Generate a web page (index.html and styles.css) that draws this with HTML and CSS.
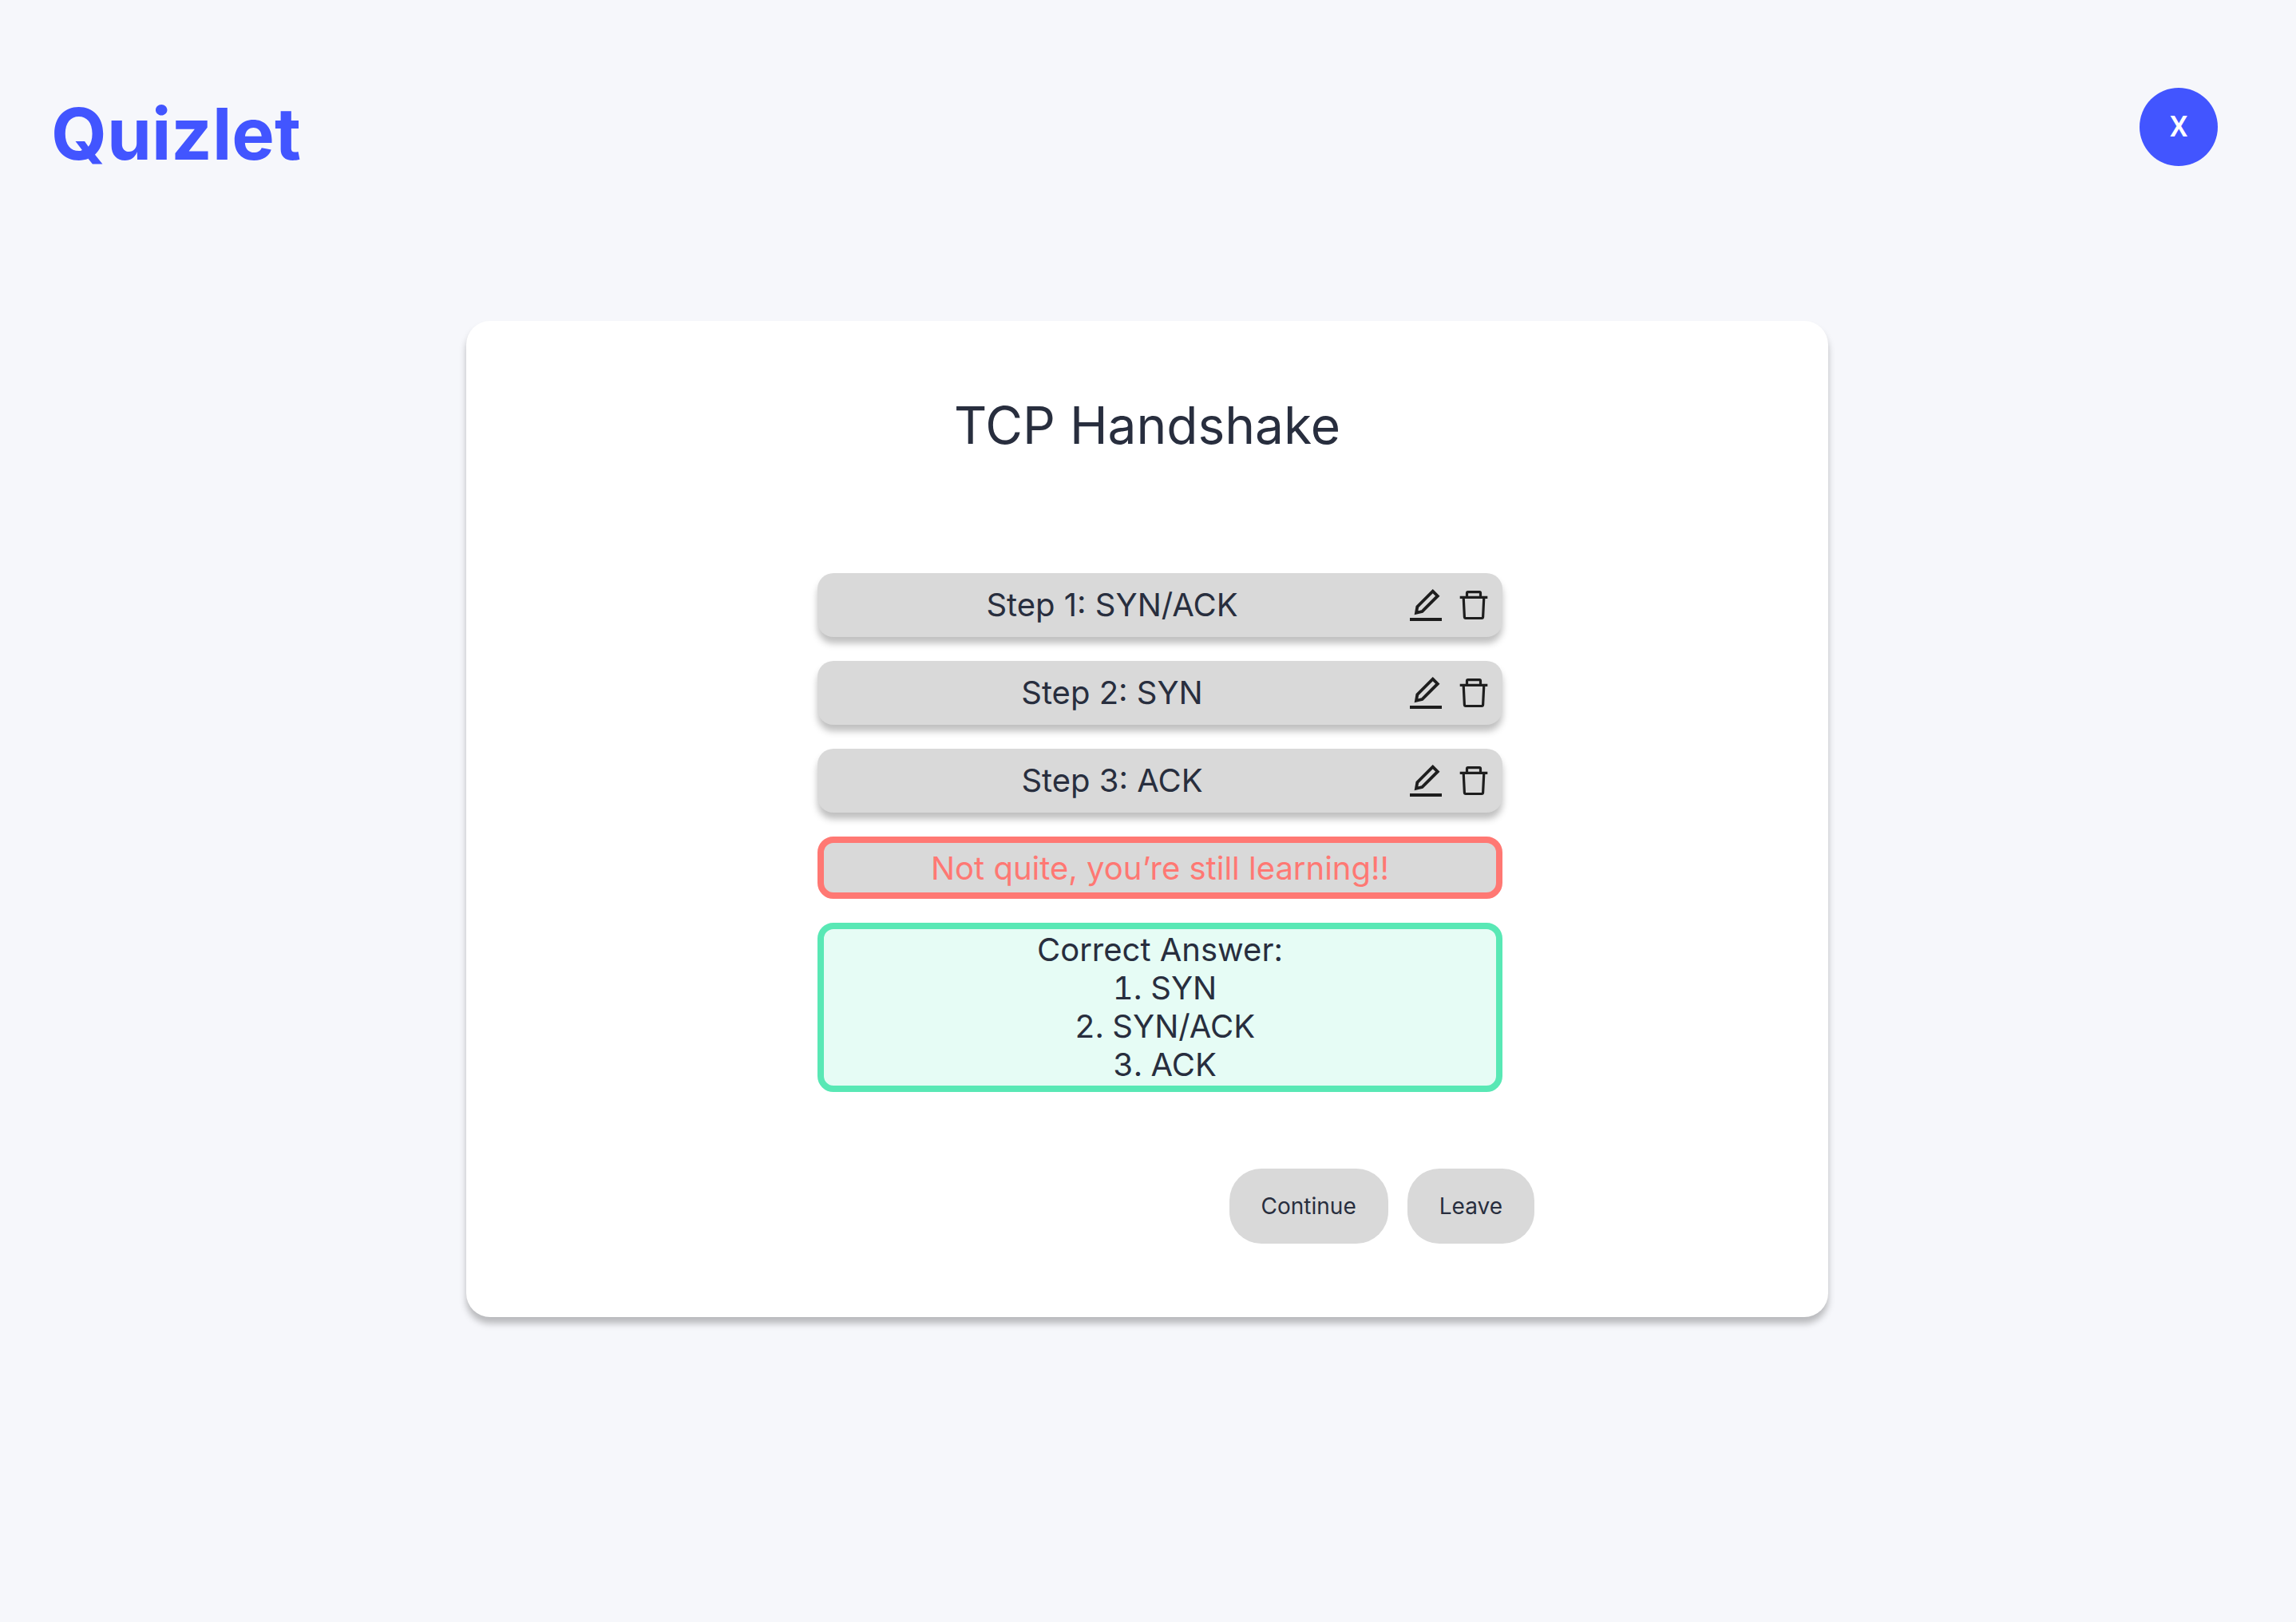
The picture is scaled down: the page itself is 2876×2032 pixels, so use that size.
FILE: index.html
```html
<!DOCTYPE html>
<html lang="en">
<head>
<meta charset="utf-8">
<title>Quizlet – TCP Handshake</title>
<link rel="stylesheet" href="styles.css">
</head>
<body>
<svg class="sprite" aria-hidden="true">
  <symbol id="icon-edit" viewBox="0 0 48 48">
    <path d="M4 42H44" stroke-width="4"/>
    <path d="M32.7 6.6L38.8 12.7L19.4 32L12 33.8L13.3 26.1Z" stroke-width="3.8"/>
  </symbol>
  <symbol id="icon-trash" viewBox="0 0 48 48">
    <path d="M6.7 14.3H41.3M15.5 14.3V9Q15.5 7.7 16.8 7.7H31.2Q32.5 7.7 32.5 9V14.3M11.2 14.3L12.4 39Q12.5 40.5 14 40.5H34Q35.5 40.5 35.6 39L36.8 14.3" stroke-width="3.2"/>
  </symbol>
</svg>
<header class="topbar">
  <a class="logo" href="#">Quizlet</a>
  <button class="avatar" type="button" aria-label="X">X</button>
</header>
<main class="page">
  <section class="card">
    <h1 class="title">TCP Handshake</h1>
    <div class="quiz">
      <div class="answers">
        <div class="step">
          <span class="step-label">Step 1: SYN/ACK</span>
          <button class="icon-button" type="button" aria-label="Edit step 1"><svg class="icon"><use href="#icon-edit"/></svg></button>
          <button class="icon-button" type="button" aria-label="Delete step 1"><svg class="icon"><use href="#icon-trash"/></svg></button>
        </div>
        <div class="step">
          <span class="step-label">Step 2: SYN</span>
          <button class="icon-button" type="button" aria-label="Edit step 2"><svg class="icon"><use href="#icon-edit"/></svg></button>
          <button class="icon-button" type="button" aria-label="Delete step 2"><svg class="icon"><use href="#icon-trash"/></svg></button>
        </div>
        <div class="step">
          <span class="step-label">Step 3: ACK</span>
          <button class="icon-button" type="button" aria-label="Edit step 3"><svg class="icon"><use href="#icon-edit"/></svg></button>
          <button class="icon-button" type="button" aria-label="Delete step 3"><svg class="icon"><use href="#icon-trash"/></svg></button>
        </div>
        <p class="result">Not quite, you’re still learning!!</p>
        <div class="solution">
          <p class="solution-title">Correct Answer:</p>
          <ol class="solution-list">
            <li>SYN</li>
            <li>SYN/ACK</li>
            <li>ACK</li>
          </ol>
        </div>
      </div>
      <div class="actions">
        <button class="button" type="button">Continue</button>
        <button class="button" type="button">Leave</button>
      </div>
    </div>
  </section>
</main>
</body>
</html>
```
FILE: styles.css
```css
* {
  box-sizing: border-box;
}

body {
  margin: 0;
  background: #f6f7fb;
  color: #282e3e;
  font-family: Inter, "Liberation Sans", sans-serif;
  font-size: 40px;
  line-height: 48px;
}

h1, p, ol {
  margin: 0;
  padding: 0;
  font-weight: 400;
}

button {
  border: 0;
  padding: 0;
  color: inherit;
  font-family: inherit;
  cursor: pointer;
}

.sprite {
  display: none;
}

.topbar {
  display: flex;
  align-items: flex-start;
  justify-content: space-between;
  padding: 110px 98px 0 64px;
}

.logo {
  color: #4255ff;
  font-size: 90px;
  font-weight: 700;
  line-height: 116px;
  height: 98px;
  text-decoration: none;
}

.avatar {
  width: 98px;
  height: 98px;
  border-radius: 50%;
  background: #4255ff;
  color: #fff;
  font-family: Roboto, sans-serif;
  font-size: 36px;
  font-weight: 500;
}

.page {
  display: flex;
  justify-content: center;
  padding: 194px 34px 80px 32px;
}

.card {
  display: flex;
  flex-direction: column;
  align-items: center;
  gap: 146px;
  width: 100%;
  max-width: 1706px;
  padding: 92px 40px;
  border-radius: 30px;
  background: #fff;
  box-shadow: 0 8px 8px rgba(0, 0, 0, 0.25);
}

.title {
  font-size: 64px;
  line-height: 78px;
}

.quiz {
  display: flex;
  flex-direction: column;
  gap: 96px;
  width: 100%;
  max-width: 970px;
}

.answers {
  display: flex;
  flex-direction: column;
  gap: 30px;
  padding: 0 40px 0 72px;
  text-align: center;
}

.step {
  display: flex;
  align-items: center;
  gap: 12px;
  padding: 16px 12px 16px 0;
  border-radius: 20px;
  background: #d9d9d9;
  box-shadow: 0 8px 8px rgba(0, 0, 0, 0.25);
}

.step-label {
  flex: 1;
  margin-right: -12px;
}

.icon-button {
  display: flex;
  background: none;
}

.icon {
  width: 48px;
  height: 48px;
  fill: none;
  stroke: #1e1e1e;
}

.result {
  padding: 8px 0 6px;
  border: 8px solid #ff7873;
  border-radius: 20px;
  background: #d9d9d9;
  color: #ff7873;
}

.solution {
  padding: 2px 0;
  border: 8px solid #59e8b5;
  border-radius: 20px;
  background: #e6fcf5;
}

.solution-list {
  padding-left: 12px;
  list-style: decimal inside;
}

.actions {
  display: flex;
  justify-content: flex-end;
  gap: 24px;
}

.button {
  padding: 30px 40px;
  border-radius: 40px;
  background: #d9d9d9;
  font-size: 28px;
  line-height: 34px;
}
```
